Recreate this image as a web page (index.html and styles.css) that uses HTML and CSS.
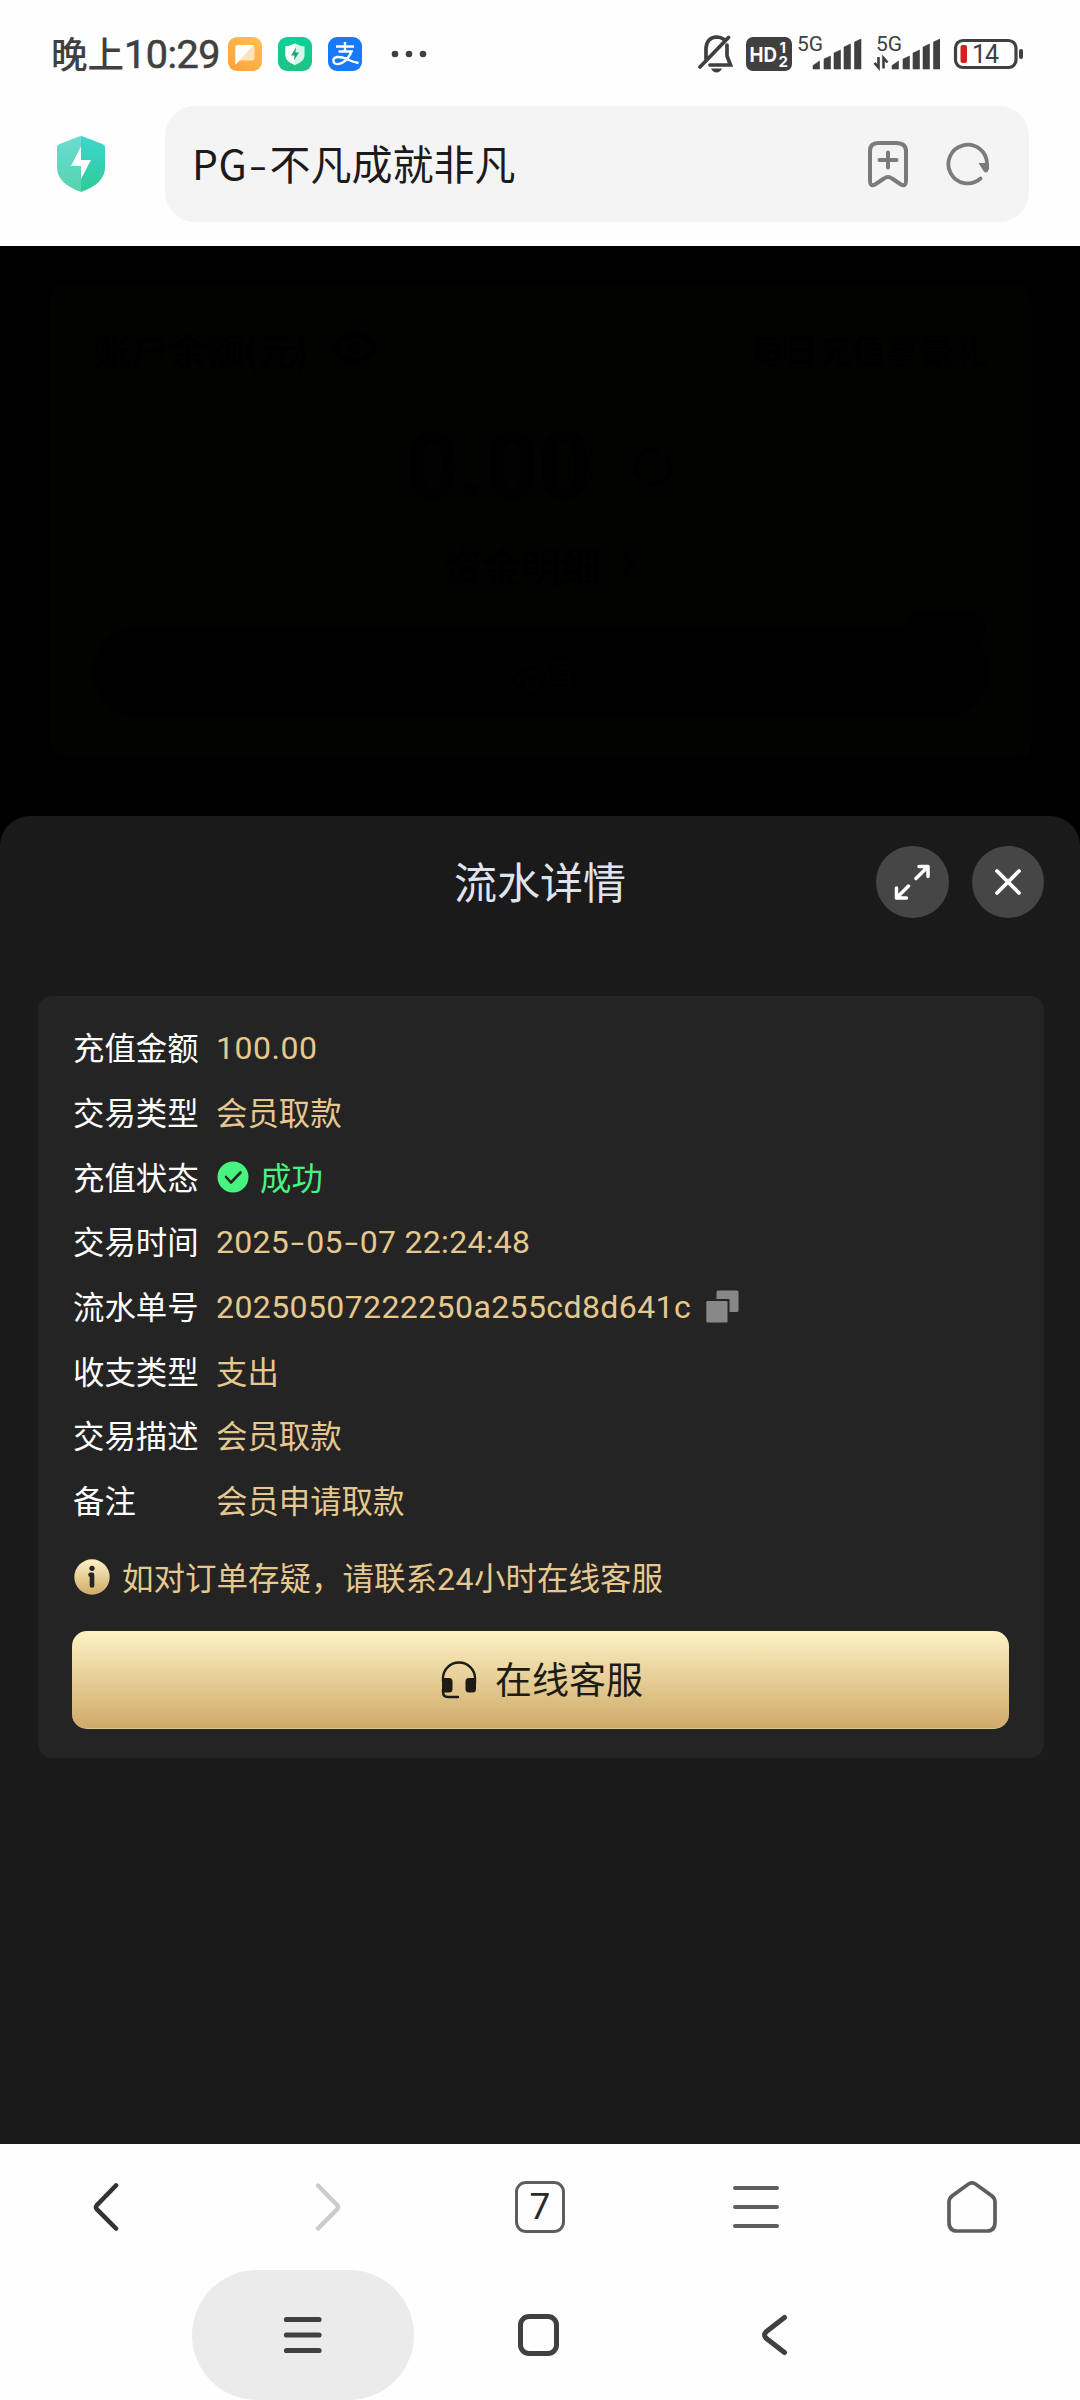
FILE: index.html
```html
<!DOCTYPE html>
<html lang="zh-CN">
<head>
<meta charset="utf-8">
<title>流水详情</title>
<link rel="stylesheet" href="styles.css">
</head>
<body>
<div class="screen">
  <header class="status">
    <div class="status-left">
      <span class="clock">晚上<span class="clock-num">10:29</span></span>
      <svg class="app" viewBox="0 0 34 34"><defs><linearGradient id="og" x1="0" y1="1" x2="1" y2="0"><stop offset="0" stop-color="#ff9f3c"/><stop offset="1" stop-color="#ffc24f"/></linearGradient></defs><rect width="34" height="34" rx="9" fill="url(#og)"/><path d="M10 8H24Q26.500 8 26.500 10.500V21Q26.500 23.500 24 23.500H12L7.500 27.500V10.500Q7.500 8 10 8Z" fill="#ffe3bd"/><path d="M10 8H25.500L7.500 27.500V10.500Q7.500 8 10 8Z" fill="#fff"/></svg>
      <svg class="app" viewBox="0 0 34 34"><defs><linearGradient id="gg" x1="0" y1="0" x2="0" y2="1"><stop offset="0" stop-color="#0fd09a"/><stop offset="1" stop-color="#20c382"/></linearGradient></defs><rect width="34" height="34" rx="9" fill="url(#gg)"/><path d="M17 6.500Q22 9 26.500 9.500V19Q26 24.500 17 28Q8 24.500 7.500 19V9.500Q12 9 17 6.500Z" fill="#d5f6eb"/><path d="M17 6.500Q12 9 7.500 9.500V19Q8 24.500 17 28Z" fill="#fff"/><path d="M18 10.500L13 18.500H16.500L16 23.500L21 15.500H17.500Z" fill="#17a876"/></svg>
      <svg class="app" viewBox="0 0 34 34"><rect width="34" height="34" rx="9" fill="#1879fb"/><path d="M8 9.500H26M17 5V14M10.500 14.500H23.500Q21 21 15.500 25Q9 29 5.800 25.500Q4 21 9 20Q14 19.500 21 23Q25 25 30.500 26" fill="none" stroke="#fff" stroke-width="2.400"/></svg>
      <svg class="dots" viewBox="0 0 36 8"><g fill="#404040"><circle cx="4" cy="4" r="3.300"/><circle cx="18" cy="4" r="3.300"/><circle cx="32" cy="4" r="3.300"/></g></svg>
    </div>
    <div class="status-right">
      <svg width="36" height="38" viewBox="698 36 36 38"><g fill="none" stroke="#404040" stroke-width="3.700"><path d="M706 60V49Q707 38.500 716.500 38Q721 38 724 40.500M727 46V57L730.500 66H710M700 68L728.500 38.500" stroke-linecap="round"/></g><path d="M711 69.500H722Q720 73.500 716.500 73.500T711 69.500Z" fill="#404040"/></svg>
      <svg class="hd" width="46" height="34" viewBox="0 0 46 34"><rect width="46" height="34" rx="7" fill="#404040"/><g fill="#fff" font-family="Inter,sans-serif" font-weight="700"><text x="3.500" y="24.500" font-size="20" textLength="27.500" lengthAdjust="spacingAndGlyphs">HD</text><text x="33.500" y="15.500" font-size="15">1</text><text x="32.500" y="30" font-size="15">2</text></g></svg>
      <svg class="sig-a" width="65" height="48" viewBox="797 31 65 48"><text x="797" y="52" font-family="Roboto,sans-serif" font-size="21" fill="#404040">5G</text><path d="M813 70V66.500L819.500 62V70ZM824 70V60L830.500 57V70ZM834 70V54L840.500 51V70ZM844 70V48L850.500 45V70ZM854.500 70V43L861 40V70Z" fill="#404040" stroke="#404040" stroke-width=".6" stroke-linejoin="round"/></svg>
      <svg class="sig-b" width="67" height="48" viewBox="794 31 67 48"><text x="797" y="52" font-family="Roboto,sans-serif" font-size="21" fill="#404040">5G</text><path d="M813 70V66.500L819.500 62V70ZM824 70V60L830.500 57V70ZM834 70V54L840.500 51V70ZM844 70V48L850.500 45V70ZM854.500 70V43L861 40V70Z" fill="#404040" stroke="#404040" stroke-width=".6" stroke-linejoin="round"/><path d="M799.500 58V68.500L795.500 63.800M804.500 69.500V59L808.500 63.500" fill="none" stroke="#404040" stroke-width="2.600"/></svg>
      <svg class="bat" width="71" height="32" viewBox="953 38 71 32"><rect x="955.500" y="40.500" width="60.500" height="27" rx="7.500" fill="none" stroke="#404040" stroke-width="3.200"/><rect x="1019" y="49" width="4" height="10" rx="2" fill="#404040"/><rect x="960.500" y="45" width="6.500" height="18" rx="2" fill="#d81f20"/><text x="972" y="62.700" font-family="Roboto,sans-serif" font-size="25" letter-spacing="-1" fill="#404040">14</text></svg>
    </div>
  </header>
  <div class="browser">
    <svg class="shield" width="48" height="56" viewBox="57 136.500 48 56"><defs><linearGradient id="sl" x1="0" y1="0" x2="0" y2="1"><stop offset="0" stop-color="#6bdcd2"/><stop offset="1" stop-color="#55d3ad"/></linearGradient><linearGradient id="sr" x1="0" y1="0" x2="0" y2="1"><stop offset="0" stop-color="#3fd5d0"/><stop offset="1" stop-color="#2ccb97"/></linearGradient></defs><path d="M81 136.500Q79 136.700 59 144.800Q57 145.500 57 147.500V168Q57 184 81 192.500Z" fill="url(#sl)"/><path d="M81 136.500Q83 136.700 103 144.800Q105 145.500 105 147.500V168Q105 184 81 192.500Z" fill="url(#sr)"/><path d="M81 147V160.500H91L81 179.500V166.500H71Z" fill="#fff"/></svg>
    <div class="url">
      <span class="url-text"><span class="url-latin">PG</span><span class="url-dash">-</span>不凡成就非凡</span>
      <svg width="42" height="48" viewBox="867 140 42 48"><path d="M870 151Q870 143 878 143H896Q906 143 906 151V181Q906 187 901 184.500L892 178.500Q888 175.500 884 178.500L875 184.500Q870 187 870 181ZM888 152.500V167.500M879.500 160H896.500" fill="none" stroke="#7b7b7b" stroke-width="4" stroke-linecap="round"/></svg>
      <svg class="reload" width="44" height="46" viewBox="946 141 44 46"><path d="M980.500 178.500A19.300 19.300 0 1 1 987 164" fill="none" stroke="#7b7b7b" stroke-width="3.800" stroke-linecap="round"/><path d="M978.500 163H989V169Q986.500 175 983.500 171Z" fill="#7b7b7b"/></svg>
    </div>
  </div>
  <main class="page">
    <section class="wallet">
      <div class="wallet-head"><span class="wallet-title">账户余额(元)<svg width="46" height="34" viewBox="0 0 46 34"><path d="M2 17Q23-10 44 17Q23 44 2 17Z" fill="none" stroke="#000" stroke-width="5"/><circle cx="23" cy="17" r="6" fill="#000"/></svg></span><span>每日充值拿豪礼</span></div>
      <div class="balance">0.00<svg width="44" height="44" viewBox="0 0 44 44"><path d="M8 32A17 17 0 0 1 27 6M36 12A17 17 0 0 1 17 38" fill="none" stroke="#000" stroke-width="4"/></svg></div>
      <div class="flow">资金明细<svg width="20" height="30" viewBox="0 0 20 30"><path d="M4 3L14 15L4 27" fill="none" stroke="#000" stroke-width="3"/></svg></div>
      <div class="recharge">充值<i class="tag"></i></div>
    </section>
    <section class="sheet">
      <div class="sheet-head">
        <h1>流水详情</h1>
        <div class="tools">
          <span class="round"><svg width="36" height="36" viewBox="894 864 36 36"><path d="M916 878.500L928 866.500M919 866.500H928V876.500M908.500 886L896.500 898M896.500 888V898H906.500" fill="none" stroke="#fff" stroke-width="3.500" stroke-linecap="round" stroke-linejoin="round"/></svg></span>
          <span class="round"><svg width="28" height="28" viewBox="0 0 28 28"><path d="M3 3L25 25M25 3L3 25" stroke="#fff" stroke-width="3.800" stroke-linecap="round"/></svg></span>
        </div>
      </div>
      <div class="card">
        <dl class="rows">
          <dt>充值金额</dt><dd class="num amount">100.00</dd>
          <dt>交易类型</dt><dd>会员取款</dd>
          <dt>充值状态</dt><dd class="ok"><svg width="32" height="32" viewBox="0 0 32 32"><circle cx="16" cy="16" r="15.500" fill="#46f57f"/><path d="M9 16L14 21.500L23.500 11.500" fill="none" stroke="#242424" stroke-width="2.600" stroke-linecap="round" stroke-linejoin="round"/></svg>成功</dd>
          <dt>交易时间</dt><dd class="num date">2025<b>-</b>05<b>-</b>07 22:24:48</dd>
          <dt>流水单号</dt><dd class="num serial">20250507222250a255cd8d641c<svg width="33" height="33" viewBox="0 0 33 33"><path d="M12 .5H31Q32.500 .5 32.500 2V20.500Q32.500 22 31 22H23.500V9H10.500V2Q10.500 .5 12 .5Z" fill="#878787"/><rect x=".3" y="11" width="21.200" height="21.500" rx="1.200" fill="#878787"/></svg></dd>
          <dt>收支类型</dt><dd>支出</dd>
          <dt>交易描述</dt><dd>会员取款</dd>
          <dt>备注</dt><dd>会员申请取款</dd>
        </dl>
        <p class="hint"><svg width="36" height="36" viewBox="0 0 36 36"><defs><linearGradient id="ig" x1="0" y1="0" x2="0" y2="1"><stop offset="0" stop-color="#fdf2c4"/><stop offset="1" stop-color="#d0aa68"/></linearGradient></defs><circle cx="18" cy="18" r="17.700" fill="url(#ig)"/><circle cx="18" cy="9.300" r="2.600" fill="#242424"/><path d="M16.500 15.800H18V26.500" fill="none" stroke="#242424" stroke-width="4.600" stroke-linecap="round" stroke-linejoin="round"/></svg><span>如对订单存疑，请联系<span class="n24">24</span>小时在线客服</span></p>
        <div class="service"><svg width="36" height="38" viewBox="0 0 36 38"><path d="M2 20V17.500A15.800 15.800 0 0 1 34 17.500V22M2 28V31Q2 36 7 36H17" fill="none" stroke="#1d1b16" stroke-width="2.400" stroke-linecap="round"/><path d="M1 17H8Q11.500 17 11.500 20.500V28Q11.500 31.500 8 31.500H1ZM35 17V28Q35 31.500 31.500 31.500H28Q24.500 31.500 24.500 28V20.500Q24.500 17 28 17Z" fill="#1d1b16"/></svg><span>在线客服</span></div>
      </div>
    </section>
  </main>
  <nav class="toolbar">
    <svg width="28" height="52" viewBox="93 2181 28 52"><path d="M116 2185.500L97 2205Q95 2207.200 97 2209.400L116 2228.500" fill="none" stroke="#333" stroke-width="4.600" stroke-linecap="round"/></svg>
    <svg width="28" height="52" viewBox="313 2181 28 52"><path d="M318 2185.500L337 2205Q339 2207.200 337 2209.400L318 2228.500" fill="none" stroke="#cbcbcb" stroke-width="4.400" stroke-linecap="round"/></svg>
    <span class="tabs">7</span>
    <svg width="46" height="44" viewBox="0 0 46 44"><path d="M2 3H44M2 22H44M2 41H44" stroke="#5e5e5e" stroke-width="4" stroke-linecap="round"/></svg>
    <svg width="50" height="52" viewBox="947 2180 50 52"><path d="M968.500 2183Q972 2180.700 975.500 2183L992 2195Q995 2197.500 995 2201V2221Q995 2230 987 2230H957Q949 2230 949 2221V2201Q949 2197.500 952 2195Z" fill="none" stroke="#5e5e5e" stroke-width="3.700"/></svg>
  </nav>
  <nav class="system">
    <span class="pill"><svg width="40" height="38" viewBox="0 0 40 38"><path d="M3.500 3.500H36M3.500 19H36M3.500 34.500H36" stroke="#404040" stroke-width="5.200" stroke-linecap="round"/></svg></span>
    <span class="home"></span>
    <svg width="26" height="42" viewBox="762 2314 26 42"><path d="M784.500 2317.500L766.500 2331.500Q762.500 2335 766.500 2338.500L784.500 2352.500" fill="none" stroke="#404040" stroke-width="5" stroke-linecap="round"/></svg>
  </nav>
</div>
</body>
</html>
```
FILE: styles.css
```css
* { box-sizing: border-box; margin: 0; padding: 0; }
body { background: #fff; font-family: "Noto Sans CJK SC", sans-serif; }
svg { display: block; flex: none; }
.screen { width: 1080px; height: 2400px; display: flex; flex-direction: column; overflow: hidden; background: #fefefe; }

.status { height: 106px; padding: 2px 56px 0 51px; display: flex; justify-content: space-between; align-items: center; }
.status-left, .status-right { display: flex; align-items: center; }
.clock { width: 177px; padding-bottom: 3px; font-size: 36.5px; font-weight: 500; color: #404040; white-space: nowrap; }
.clock-num { font-family: Roboto, sans-serif; font-size: 39.5px; letter-spacing: -.5px; font-weight: 400; -webkit-text-stroke: .6px #404040; }
.app { width: 34px; height: 34px; margin-right: 16px; }
.dots { width: 36px; height: 8px; margin-left: 13px; }
.hd { margin-left: 12px; }
.sig-a { margin-left: 5px; }
.sig-b { margin-left: 11px; }
.bat { margin-left: 13px; }

.browser { height: 140px; padding: 0 51px 24px 57px; display: flex; align-items: center; gap: 60px; }
.url { flex: 1; height: 116px; border-radius: 30px; background: #f4f4f4; display: flex; align-items: center; padding: 0 39px 0 27px; }
.url-text { flex: 1; padding-bottom: 5px; font-size: 41px; line-height: 60px; color: #1b1b1b; white-space: nowrap; }
.url-latin { letter-spacing: .6px; }
.url-dash { display: inline-block; width: 22px; text-align: center; transform: scaleX(1.300); }
.reload { margin-left: 37px; }

.page { height: 1898px; background: #000; padding-top: 40px; display: flex; flex-direction: column; }
.wallet { height: 472px; margin: 0 49px 58px 50px; padding: 37px 43px 42px; border-radius: 12px; background: #020201; color: #000; display: flex; flex-direction: column; }
.wallet-head { display: flex; justify-content: space-between; align-items: center; height: 50px; font-size: 34px; }
.wallet-title { display: flex; align-items: center; gap: 22px; font-size: 38px; }
.balance { height: 130px; margin-top: 29px; display: flex; justify-content: center; align-items: center; gap: 40px; font: 700 92px/130px Roboto, sans-serif; }
.flow { height: 50px; margin-top: 7px; display: flex; justify-content: center; align-items: center; gap: 18px; font-size: 39.5px; }
.recharge { position: relative; height: 88px; margin-top: auto; border-radius: 44px; background: #000; color: #020202; font-size: 34px; display: flex; justify-content: center; align-items: center; }
.tag { position: absolute; right: 2px; top: -16px; width: 80px; height: 34px; border-radius: 17px 17px 17px 0; background: #000; }

.sheet { flex: 1; border-radius: 30px 30px 0 0; background: #1a1a1a; display: flex; flex-direction: column; }
.sheet-head { height: 132px; display: grid; grid-template-columns: 1fr auto 1fr; align-items: center; padding: 0 36px; }
h1 { grid-column: 2; padding-bottom: 5px; font-size: 43px; font-weight: 400; line-height: 60px; color: #dee3ee; }
.tools { display: flex; justify-content: flex-end; gap: 23px; }
.round { width: 72.5px; height: 72.5px; border-radius: 50%; background: #464646; display: flex; align-items: center; justify-content: center; }

.card { height: 762px; margin: 48px 36px 0 38px; padding: 19px 35px 29px 34px; border-radius: 14px; background: #242424; display: flex; flex-direction: column; }
.rows { display: grid; grid-template-columns: 144px 1fr; grid-auto-rows: 64.7px; font-size: 31.4px; align-items: center; line-height: 44px; }
dt { color: #fff; padding-left: 1px; }
dd { color: #e6c88f; white-space: nowrap; display: flex; align-items: center; }
.num { font-family: Roboto, sans-serif; font-size: 32px; white-space: pre; padding-top: 1px; }
.amount { letter-spacing: .5px; }
.date { letter-spacing: .3px; }
.date b { font-weight: 400; width: 17px; text-align: center; transform: scaleX(1.500); }
.serial { letter-spacing: .4px; gap: 15px; }
.ok { color: #46f57f; gap: 11px; padding-left: 1px; }
.hint { display: flex; align-items: center; gap: 12px; height: 48px; margin-top: 20px; padding-left: 2px; font-size: 31.5px; color: #e6c88f; white-space: nowrap; }
.hint > span { padding-bottom: 2px; }
.n24 { font-family: Roboto, sans-serif; font-size: 32px; letter-spacing: .5px; }
.service { height: 98px; margin-top: auto; border-radius: 15px; background: linear-gradient(#fdf2c4, #d0aa68); border-bottom: 1px solid #dfc791; color: #1d1b16; font-size: 37px; display: flex; justify-content: center; align-items: center; gap: 18px; padding-left: 3px; }
.service > span { padding-bottom: 4px; }

.toolbar { height: 126px; padding: 0 83px 0 93px; display: flex; align-items: center; }
.toolbar > :nth-child(2) { margin-left: 192px; }
.toolbar > :nth-child(3) { margin-left: 174px; }
.toolbar > :nth-child(4) { margin-left: 168px; }
.toolbar > :nth-child(5) { margin-left: 168px; }
.tabs { width: 50px; height: 52px; border: 3.500px solid #5e5e5e; border-radius: 11px; font: 37px/46px Roboto, sans-serif; color: #2a2a2a; text-align: center; }
.system { height: 130px; padding-left: 192px; display: flex; align-items: center; }
.pill { width: 222px; height: 130px; border-radius: 65px; background: #ebebeb; display: flex; align-items: center; justify-content: center; }
.home { width: 41px; height: 42px; margin: 0 203px 0 104px; border: 5px solid #404040; border-radius: 11px; }
```
